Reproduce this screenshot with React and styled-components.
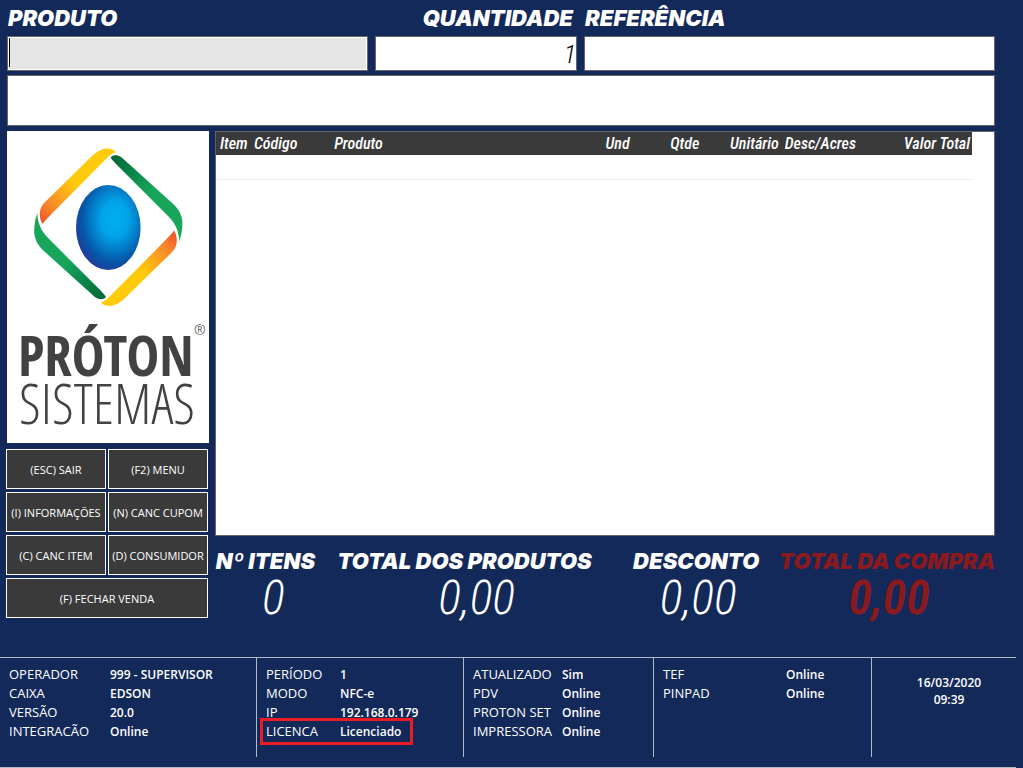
import React from "react";
import styled, { createGlobalStyle, css } from "styled-components";

const navy = "#132959";
const charcoal = "#3a3a3a";
const narrow = '"Roboto Condensed", "Open Sans Condensed", sans-serif';
const black = 'Inter, "Liberation Sans", sans-serif';
const ui = '"Open Sans", "Noto Sans", sans-serif';

const GlobalStyle = createGlobalStyle`
  * { box-sizing: border-box; }
  body { margin: 0; background: ${navy}; color: #fff; font-family: ${ui}; }
`;

const Page = styled.div`
  display: flex;
  flex-direction: column;
  min-height: 100vh;
`;

const Form = styled.form`
  display: grid;
  grid-template-columns: 361fr 202fr 411fr;
  column-gap: 7px;
  row-gap: 4px;
  padding: 0 28px 5px 7px;
`;

const Field = styled.div`
  display: flex;
  flex-direction: column;
  min-width: 0;
  ${(p) => p.$wide && css`grid-column: 1 / -1;`}
`;

const heading = css`
  font-family: ${black};
  font-weight: 900;
  font-style: italic;
  white-space: nowrap;
`;

const FieldLabel = styled.label`
  ${heading}
  padding: 0 4px 0 1px;
  font-size: 22px;
  line-height: 36px;
  align-self: ${(p) => (p.$end ? "flex-end" : "flex-start")};
`;

const TextBox = styled.input`
  width: 100%;
  height: ${(p) => (p.$tall ? 51 : 35)}px;
  padding: 0;
  border: 1px solid #666;
  border-radius: 0;
  outline: none;
  background: ${(p) => (p.$active ? "#e5e5e5" : "#fff")};
  box-shadow: inset 0 0 0 1px #fff;
  color: #000;
  font: italic 300 26px ${narrow};
  text-align: ${(p) => (p.$end ? "right" : "left")};
`;

const CaretBox = styled.div`
  position: relative;
  &::after {
    content: "";
    position: absolute;
    left: 2px;
    top: 2px;
    bottom: 4px;
    width: 1px;
    background: #000;
  }
`;

const Main = styled.main`
  flex: 1;
  display: grid;
  grid-template-columns: 202px 1fr;
  column-gap: 6px;
  padding: 0 28px 39px 7px;
`;

const Side = styled.aside`
  display: flex;
  flex-direction: column;
  gap: 6px;
`;

const LogoPanel = styled.div`
  flex: 1;
  background: #fff;
  svg { display: block; width: 100%; height: 100%; }
`;

const Actions = styled.div`
  display: grid;
  grid-template-columns: 1fr 1fr;
  gap: 3px 2px;
  margin: 0 1px 0 -1px;
`;

const Action = styled.button`
  height: 40px;
  padding: 0;
  border: 1px solid #fff;
  background: ${charcoal};
  color: #fff;
  font: 11px ${ui};
  white-space: nowrap;
  ${(p) => p.$wide && css`grid-column: 1 / -1;`}
`;

const Sale = styled.section`
  display: flex;
  flex-direction: column;
  min-width: 0;
`;

const ItemsPanel = styled.div`
  flex: 1;
  padding-right: 22px;
  border: 1px solid #666;
  background: #fff;
`;

const Items = styled.table`
  width: 100%;
  table-layout: fixed;
  border-collapse: collapse;
  td { height: 24px; padding: 0; border-bottom: 1px solid #ececec; }
`;

const HeadCell = styled.th`
  width: ${(p) => p.$w}%;
  height: 23px;
  padding: 0 ${(p) => (p.$end ? 2 : 4)}px 0 4px;
  background: ${charcoal};
  color: #fff;
  font: italic 500 16px/23px ${narrow};
  text-align: ${(p) => (p.$end ? "right" : "left")};
  white-space: nowrap;
`;

const Totals = styled.dl`
  display: grid;
  grid-template-columns: 101fr 298fr 166fr 215fr;
  margin: 0;
  padding-top: 12px;
`;

const Total = styled.div`
  display: flex;
  flex-direction: column;
  align-items: center;
  color: ${(p) => (p.$accent ? "#8b1a1e" : "#fff")};
  dt { ${heading} font-size: 22px; line-height: 26px; }
  dd {
    margin: 2px 0 -2px;
    padding-left: ${(p) => p.$indent}px;
    font: italic ${(p) => (p.$accent ? 600 : 300)} 48px/44px ${narrow};
  }
`;

const StatusBar = styled.footer`
  display: grid;
  grid-template-columns: 257fr 207fr 190fr 218fr 144fr;
  margin-right: 7px;
  padding-bottom: 10px;
  border-top: 1px solid #b4b8c4;
  border-bottom: 1px solid #b4b8c4;
`;

const StatusGroup = styled.dl`
  margin: 0;
  height: 99px;
  padding: 7px 0 0 9px;
  border-right: 1px solid #b4b8c4;
`;

const StatusRow = styled.div`
  position: relative;
  display: grid;
  grid-template-columns: ${(p) => p.$label}px 1fr;
  font-size: 12px;
  line-height: 19px;
  white-space: nowrap;
  dt { font-size: 13px; font-weight: 500; }
  dd { margin: 0; font-weight: 600; }
  ${(p) => p.$marked && css`
    &::after {
      content: "";
      position: absolute;
      inset: -4px 50px -4px -6px;
      border: 3px solid #ed1c24;
    }
  `}
`;

const Clock = styled.div`
  padding: 16px 0 0 10px;
  font-size: 12px;
  font-weight: 600;
  line-height: 17px;
  text-align: center;
  time { display: block; }
`;

const columns = [
  ["Item", 4.5], ["Código", 10.6], ["Produto", 35.9], ["Und", 6],
  ["Qtde", 7.2, true], ["Unitário", 10.5, true], ["Desc/Acres", 9.7, true], ["Valor Total", 15.6, true],
];

const actions = [
  "(ESC) SAIR", "(F2) MENU", "(I) INFORMAÇÕES", "(N) CANC CUPOM",
  "(C) CANC ITEM", "(D) CONSUMIDOR", "(F) FECHAR VENDA",
];

const totals = [
  { name: "Nº ITENS", value: "0", indent: 16 },
  { name: "TOTAL DOS PRODUTOS", value: "0,00", indent: 24 },
  { name: "DESCONTO", value: "0,00", indent: 4 },
  { name: "TOTAL DA COMPRA", value: "0,00", indent: 4, accent: true },
];

const status = [
  { label: 101, rows: [["OPERADOR", "999 - SUPERVISOR"], ["CAIXA", "EDSON"], ["VERSÃO", "20.0"], ["INTEGRACÃO", "Online"]] },
  { label: 74, marked: 3, rows: [["PERÍODO", "1"], ["MODO", "NFC-e"], ["IP", "192.168.0.179"], ["LICENCA", "Licenciado"]] },
  { label: 89, rows: [["ATUALIZADO", "Sim"], ["PDV", "Online"], ["PROTON SET", "Online"], ["IMPRESSORA", "Online"]] },
  { label: 123, rows: [["TEF", "Online"], ["PINPAD", "Online"]] },
];

function Ribbons() {
  return (
    <>
      <path fill="url(#gold)" d="M108.700 21 C106 17.500 99 16.500 94 19 C90 20.500 87 23 84 26 L37 72 C33.500 76 32.700 80 32.800 84 C33 87.500 34 90.500 35.300 93 C38.500 89 41.500 86 46 81.500 L98 29 C101 26 104 22.500 108.700 21Z" />
      <path fill="url(#leaf)" d="M103.700 26.500 C105 24 110 23.500 114 26 C116.500 28 119 30.500 122 33 L164 71 C172 78 175 84 175.400 91 C175.600 99 174 105 172.300 110.500 C172 101 169 93 161 85 L109 33 C107 30.500 105 29 103.700 26.500Z" />
    </>
  );
}

function Logo() {
  return (
    <svg viewBox="0 0 202 312" role="img" aria-label="Próton Sistemas">
      <defs>
        <linearGradient id="gold" gradientUnits="userSpaceOnUse" x1="104" y1="20" x2="35" y2="88">
          <stop offset="0" stopColor="#ffcb0b" />
          <stop offset=".5" stopColor="#ffca0b" />
          <stop offset=".85" stopColor="#f7882a" />
          <stop offset="1" stopColor="#f15a2b" />
        </linearGradient>
        <linearGradient id="leaf" gradientUnits="userSpaceOnUse" x1="106" y1="26" x2="172" y2="92">
          <stop offset="0" stopColor="#006837" />
          <stop offset=".55" stopColor="#17a55c" />
          <stop offset="1" stopColor="#17a65a" />
        </linearGradient>
        <radialGradient id="globe" cx=".6" cy=".4" r=".7">
          <stop offset="0" stopColor="#00aeef" />
          <stop offset=".3" stopColor="#00a4e8" />
          <stop offset=".72" stopColor="#0557a9" />
          <stop offset="1" stopColor="#2e2f92" />
        </radialGradient>
      </defs>
      <Ribbons />
      <g transform="rotate(180 101.300 96.300)"><Ribbons /></g>
      <ellipse cx="101.300" cy="96.500" rx="32.300" ry="42.500" fill="url(#globe)" />
      <text x="11" y="245" fontFamily='"Open Sans Condensed", sans-serif' fontWeight="bold" fontSize="55" fill="#424242">PRÓTON</text>
      <text x="12" y="293" fontFamily='"Open Sans Condensed Light", "Open Sans Condensed", sans-serif' fontWeight="300" fontSize="55" fill="#424242">SISTEMAS</text>
      <text x="187" y="204" fontFamily='"Open Sans Condensed Light", "Open Sans Condensed", sans-serif' fontWeight="300" fontSize="14" fill="#424242">®</text>
    </svg>
  );
}

export default function App() {
  return (
    <Page>
      <GlobalStyle />
      <Form onSubmit={(e) => e.preventDefault()}>
        <Field>
          <FieldLabel htmlFor="produto">PRODUTO</FieldLabel>
          <CaretBox><TextBox id="produto" $active /></CaretBox>
        </Field>
        <Field>
          <FieldLabel htmlFor="quantidade" $end>QUANTIDADE</FieldLabel>
          <TextBox id="quantidade" defaultValue="1" $end />
        </Field>
        <Field>
          <FieldLabel htmlFor="referencia">REFERÊNCIA</FieldLabel>
          <TextBox id="referencia" />
        </Field>
        <Field $wide>
          <TextBox $tall readOnly aria-label="Descrição do produto" />
        </Field>
      </Form>

      <Main>
        <Side>
          <LogoPanel><Logo /></LogoPanel>
          <Actions>
            {actions.map((a, i) => (
              <Action key={a} type="button" $wide={i === actions.length - 1}>{a}</Action>
            ))}
          </Actions>
        </Side>
        <Sale>
          <ItemsPanel>
            <Items>
              <thead>
                <tr>
                  {columns.map(([name, w, end]) => (
                    <HeadCell key={name} scope="col" $w={w} $end={end}>{name}</HeadCell>
                  ))}
                </tr>
              </thead>
              <tbody>
                <tr><td colSpan={columns.length} /></tr>
              </tbody>
            </Items>
          </ItemsPanel>
          <Totals>
            {totals.map((t) => (
              <Total key={t.name} $accent={t.accent} $indent={t.indent}>
                <dt>{t.name}</dt>
                <dd>{t.value}</dd>
              </Total>
            ))}
          </Totals>
        </Sale>
      </Main>

      <StatusBar>
        {status.map((group) => (
          <StatusGroup key={group.rows[0][0]}>
            {group.rows.map(([name, value], i) => (
              <StatusRow key={name} $label={group.label} $marked={group.marked === i}>
                <dt>{name}</dt>
                <dd>{value}</dd>
              </StatusRow>
            ))}
          </StatusGroup>
        ))}
        <Clock>
          <time dateTime="2020-03-16">16/03/2020</time>
          <time dateTime="09:39">09:39</time>
        </Clock>
      </StatusBar>
    </Page>
  );
}
